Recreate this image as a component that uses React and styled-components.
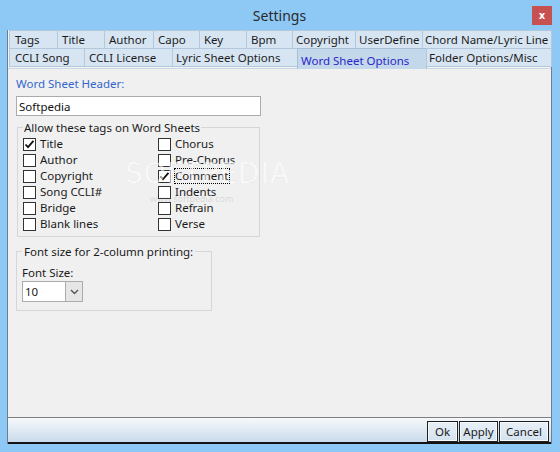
import React from "react";
import styled, { createGlobalStyle } from "styled-components";

const Global = createGlobalStyle`
  html, body { margin: 0; padding: 0; }
  body { background: #8ec8f5; font-family: "Noto Sans", "Open Sans", sans-serif; }
  * { box-sizing: border-box; }
`;

const Window = styled.div`
  width: 560px;
  height: 452px;
  background: #8ec8f5;
  display: flex;
  flex-direction: column;
  padding: 0 8px 8px 7px;
  font-size: 11.5px;
  color: #1a1a1a;
`;

const TitleBar = styled.div`
  height: 30px;
  flex: none;
  display: grid;
  grid-template-columns: 1fr auto 1fr;
  align-items: center;
`;

const Title = styled.div`
  grid-column: 2;
  font-size: 14px;
  color: #2a2a2a;
  padding-top: 1px;
`;

const Close = styled.div`
  grid-column: 3;
  justify-self: end;
  align-self: start;
  margin-top: 6px;
  width: 20px;
  height: 19px;
  background: #c75050;
  color: #fff;
  font-family: "DejaVu Sans", sans-serif;
  font-weight: bold;
  font-size: 10px;
  display: flex;
  align-items: center;
  justify-content: center;
`;

const Client = styled.div`
  flex: 1;
  display: flex;
  flex-direction: column;
  border-left: 1px solid #6c8094;
  border-right: 1px solid #6c8094;
  background: #f4f4f4;
`;

const TabStrip = styled.div`
  flex: none;
  padding-left: 1px;
  display: flex;
  flex-direction: column;
  position: relative;
  z-index: 1;
`;

const TabRow = styled.div`
  display: flex;
  height: 19px;
`;

const Tab = styled.div`
  width: ${(p) => p.$w}px;
  height: ${(p) => (p.$active ? 21 : 19)}px;
  border: 1px solid ${(p) => (p.$active ? "#a7c0d8" : "#b3c8dc")};
  border-bottom: ${(p) => (p.$active ? "none" : "1px solid #b3c8dc")};
  margin-right: -1px;
  margin-top: ${(p) => (p.$row2 ? -1 : 0)}px;
  background: ${(p) => (p.$active ? "#c3d8eb" : "#d7e5f2")};
  color: ${(p) => (p.$active ? "#2b26c9" : "#1c1c1c")};
  padding-left: ${(p) => p.$pl}px;
  padding-top: ${(p) => (p.$active ? 2 : 0)}px;
  display: flex;
  align-items: center;
  white-space: nowrap;
  overflow: hidden;
  line-height: 15px;
  flex: none;
`;

const Panel = styled.div`
  flex: 1;
  background: #f0f0f0;
  border-top: 1px solid #c9d8e6;
  padding: 7px 0 0 8px;
  position: relative;
  display: flex;
  flex-direction: column;
  align-items: flex-start;
`;

const BlueLabel = styled.div`
  color: #3366cc;
  line-height: 15px;
`;

const TextBox = styled.div`
  margin-top: 5px;
  width: 245px;
  height: 20px;
  background: #fff;
  border: 1px solid #ababab;
  padding-left: 2px;
  display: flex;
  align-items: center;
  color: #111;
`;

const Group = styled.fieldset`
  margin: ${(p) => p.$mt}px 0 0 ${(p) => p.$ml}px;
  width: ${(p) => p.$w}px;
  border: 1px solid #d6d6d6;
  padding: ${(p) => p.$pt}px 5px ${(p) => p.$pb}px 5px;
  min-width: 0;
`;

const Legend = styled.legend`
  padding: 0 ${(p) => p.$lp}px;
  line-height: 15px;
  color: #1a1a1a;
`;

const TagGrid = styled.div`
  display: grid;
  grid-template-columns: 135px 1fr;
  grid-auto-flow: column;
  grid-template-rows: repeat(6, 16px);
`;

const CheckRow = styled.div`
  display: flex;
  align-items: center;
  gap: 4px;
  line-height: 15px;
  white-space: nowrap;
`;

const Box = styled.span`
  width: 13px;
  height: 13px;
  border: 1px solid #333;
  background: #fff;
  display: inline-flex;
  align-items: center;
  justify-content: center;
  flex: none;
`;

const CheckLabel = styled.span`
  border: 1px dotted ${(p) => (p.$focus ? "#000" : "transparent")};
  margin-left: -1px;
  padding: 0 1px 0 0;
  line-height: 14px;
`;

const FontLabel = styled.div`
  margin-top: 6px;
  line-height: 15px;
`;

const Combo = styled.div`
  margin-top: 1px;
  width: 61px;
  height: 21px;
  background: #fff;
  border: 1px solid #acacac;
  display: flex;
  align-items: stretch;
`;

const ComboText = styled.div`
  flex: 1;
  padding-left: 2px;
  display: flex;
  align-items: center;
`;

const ComboButton = styled.div`
  width: 17px;
  background: #e6e6e6;
  border-left: 1px solid #acacac;
  display: flex;
  align-items: center;
  justify-content: center;
`;

const Footer = styled.div`
  flex: none;
  height: 27px;
  border-top: 1px solid #7f7f7f;
  border-bottom: 2px solid #141414;
  background: linear-gradient(#f6f9fc, #c9dbeb);
  display: flex;
  justify-content: flex-end;
  align-items: flex-end;
  gap: 1px;
  padding-right: 2px;
`;

const Button = styled.div`
  width: ${(p) => p.$w}px;
  height: 21px;
  border: 1px solid #202020;
  box-shadow: inset 0 0 0 1px #f6f9fc;
  background: linear-gradient(#e9f0f7, #d3e2ef);
  display: flex;
  align-items: center;
  justify-content: center;
  color: #1a1a1a;
`;

const Watermark = styled.div`
  position: absolute;
  left: 117px;
  top: 85px;
  pointer-events: none;
  font-family: "DejaVu Sans", sans-serif;
  font-size: 28px;
  letter-spacing: 1px;
  color: rgba(255, 255, 255, 0.6);
  -webkit-text-stroke: 0.5px rgba(0, 0, 0, 0.08);
  line-height: 40px;
`;

const WatermarkSmall = styled.div`
  position: absolute;
  left: 142px;
  top: 123px;
  pointer-events: none;
  font-size: 9px;
  color: rgba(120, 120, 120, 0.22);
`;

const Check = () => (
  <svg width="11" height="11" viewBox="0 0 11 11">
    <path d="M1.5 5.5 L4 8.2 L9.5 1.8" fill="none" stroke="#111" strokeWidth="1.8" />
  </svg>
);

const Chevron = () => (
  <svg width="9" height="6" viewBox="0 0 9 6">
    <path d="M1 1 L4.5 4.5 L8 1" fill="none" stroke="#555" strokeWidth="1.4" />
  </svg>
);

const row1 = [
  ["Tags", 49, 5],
  ["Title", 48, 4],
  ["Author", 50, 4],
  ["Capo", 47, 4],
  ["Key", 48, 4],
  ["Bpm", 47, 4],
  ["Copyright", 64, 3],
  ["UserDefine", 68, 3],
  ["Chord Name/Lyric Line", 130, 2],
];

const row2 = [
  ["CCLI Song", 76, 5],
  ["CCLI License", 89, 4],
  ["Lyric Sheet Options", 126, 3],
  ["Word Sheet Options", 130, 3, true],
  ["Folder Options/Misc", 126, 2],
];

const tags = [
  ["Title", true],
  ["Author"],
  ["Copyright"],
  ["Song CCLI#"],
  ["Bridge"],
  ["Blank lines"],
  ["Chorus"],
  ["Pre-Chorus"],
  ["Comment", true, true],
  ["Indents"],
  ["Refrain"],
  ["Verse"],
];

export default function App() {
  return (
    <>
      <Global />
      <Window>
        <TitleBar>
          <Title>Settings</Title>
          <Close>x</Close>
        </TitleBar>
        <Client>
          <TabStrip>
            <TabRow>
              {row1.map(([t, w, pl]) => (
                <Tab key={t} $w={w} $pl={pl}>
                  {t}
                </Tab>
              ))}
            </TabRow>
            <TabRow>
              {row2.map(([t, w, pl, a]) => (
                <Tab key={t} $w={w} $pl={pl} $active={a} $row2>
                  {t}
                </Tab>
              ))}
            </TabRow>
          </TabStrip>
          <Panel>
            <BlueLabel>Word Sheet Header:</BlueLabel>
            <TextBox>Softpedia</TextBox>
            <Group $mt={4} $ml={1} $w={243} $pt={1} $pb={4}>
              <Legend $lp={1}>Allow these tags on Word Sheets</Legend>
              <TagGrid>
                {tags.map(([t, c, f]) => (
                  <CheckRow key={t}>
                    <Box>{c && <Check />}</Box>
                    <CheckLabel $focus={f}>{t}</CheckLabel>
                  </CheckRow>
                ))}
              </TagGrid>
            </Group>
            <Group $mt={7} $ml={0} $w={196} $pt={0} $pb={8}>
              <Legend $lp={2}>Font size for 2-column printing:</Legend>
              <FontLabel>Font Size:</FontLabel>
              <Combo>
                <ComboText>10</ComboText>
                <ComboButton>
                  <Chevron />
                </ComboButton>
              </Combo>
            </Group>
            <Watermark>SOFTPEDIA</Watermark>
            <WatermarkSmall>www.softpedia.com</WatermarkSmall>
          </Panel>
          <Footer>
            <Button $w={31}>Ok</Button>
            <Button $w={39}>Apply</Button>
            <Button $w={50}>Cancel</Button>
          </Footer>
        </Client>
      </Window>
    </>
  );
}
